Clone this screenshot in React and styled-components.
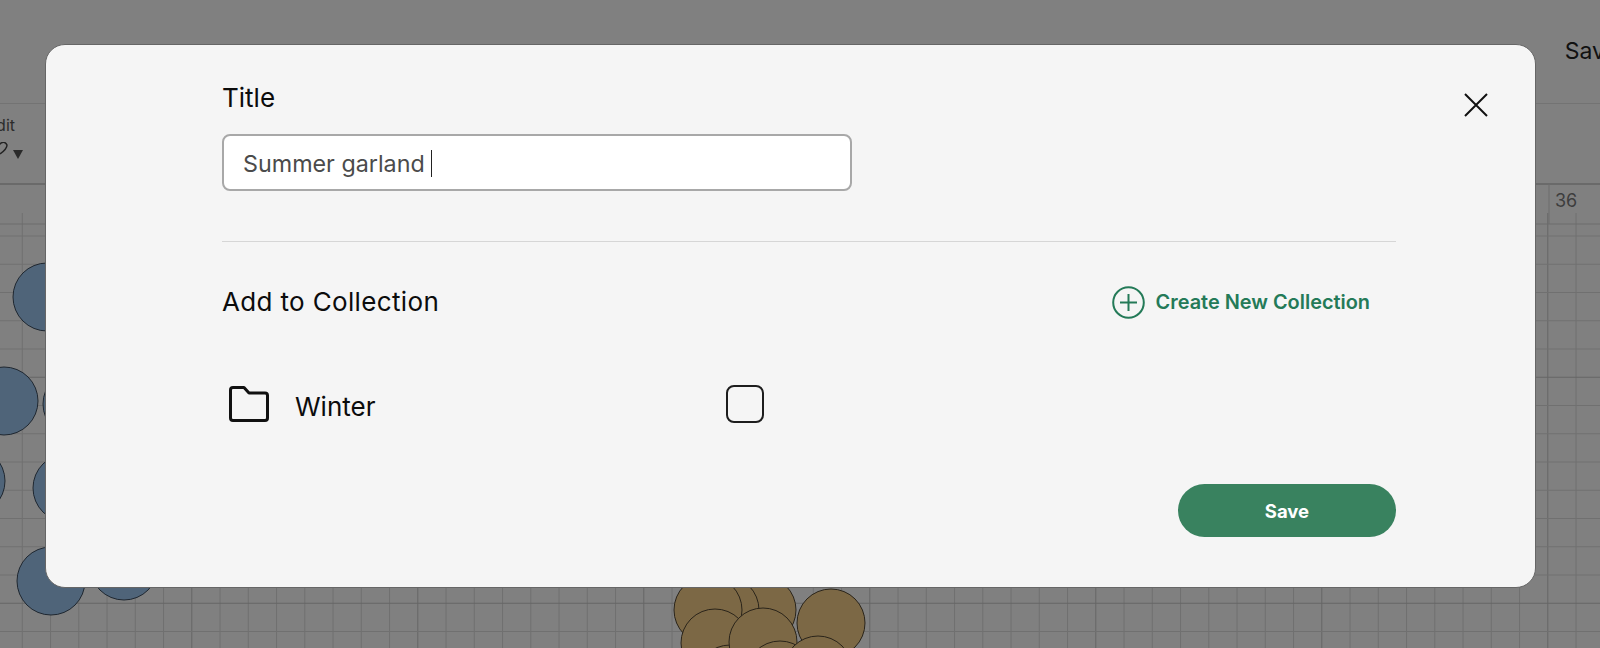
import React from "react";
import styled, { createGlobalStyle } from "styled-components";

const GlobalStyle = createGlobalStyle`
  html, body { margin: 0; padding: 0; height: 100%; overflow: hidden; }
  body { font-family: Inter, "Liberation Sans", sans-serif; background: #808080; }
`;

const Page = styled.div`
  position: relative;
  display: flex;
  flex-direction: column;
  width: 1600px;
  height: 648px;
  overflow: hidden;
  background: #808080;
`;

const TopBar = styled.div`
  display: flex;
  justify-content: flex-end;
  align-items: flex-start;
  height: 104px;
  padding-top: 37px;
  box-sizing: border-box;
  border-bottom: 1px solid #737373;
`;

const TopSave = styled.span`
  margin-right: -18px;
  font-size: 23px;
  line-height: 28px;
  color: #111;
`;

const ToolBar = styled.div`
  display: flex;
  height: 81px;
  box-sizing: border-box;
  border-bottom: 2px solid #6a6a6a;
`;

const ToolGroup = styled.div`
  display: flex;
  flex-direction: column;
  align-items: flex-end;
  width: 23px;
  padding-top: 11px;
`;

const ToolLabel = styled.span`
  font-size: 16px;
  line-height: 20px;
  color: #2c2c2c;
  margin-right: 8px;
`;

const ToolIcon = styled.svg`
  display: block;
  margin-top: 7px;
`;

const Canvas = styled.div`
  position: relative;
  flex: 1;
`;

const CanvasArt = styled.svg`
  position: absolute;
  left: 0;
  top: -185px;
`;

const RulerLabel = styled.span`
  position: absolute;
  left: 1555px;
  top: 4px;
  font-size: 18px;
  line-height: 24px;
  color: #3d3d3d;
`;

const Modal = styled.div`
  position: absolute;
  left: 45px;
  top: 44px;
  width: 1491px;
  height: 544px;
  box-sizing: border-box;
  padding: 38px 139px 0 176px;
  background: #f5f5f5;
  border: 1px solid #666;
  border-radius: 20px;
`;

const CloseButton = styled.button`
  position: absolute;
  right: 47px;
  top: 48px;
  display: flex;
  padding: 0;
  border: 0;
  background: none;
`;

const FieldLabel = styled.div`
  font-size: 26px;
  line-height: 30px;
  color: #0c0c0c;
`;

const TitleInput = styled.div`
  display: flex;
  align-items: center;
  width: 630px;
  height: 57px;
  margin-top: 21px;
  padding: 1px 0 0 19px;
  box-sizing: border-box;
  background: #fff;
  border: 2px solid #a8a8a8;
  border-radius: 8px;
  font-size: 23.3px;
  color: #4b4b4b;
`;

const Caret = styled.span`
  width: 1px;
  height: 27px;
  margin: 0 0 0 6px;
  background: #222;
`;

const Divider = styled.div`
  height: 1px;
  margin-top: 50px;
  background: #d6d6d6;
`;

const CollectionHeader = styled.div`
  display: flex;
  justify-content: space-between;
  align-items: center;
  margin-top: 42px;
  height: 36px;
`;

const SectionTitle = styled.div`
  font-size: 26px;
  line-height: 36px;
  letter-spacing: 0.35px;
  color: #0c0c0c;
`;

const CreateLink = styled.a`
  display: flex;
  align-items: center;
  gap: 11px;
  margin-right: 26px;
  font-size: 19.9px;
  font-weight: 600;
  color: #247a58;
`;

const CollectionRow = styled.div`
  display: flex;
  align-items: center;
  height: 40px;
  margin-top: 66px;
`;

const FolderIcon = styled.svg`
  margin: -4px -1px 0 7px;
`;

const FolderName = styled.span`
  width: 431px;
  margin-left: 27px;
  font-size: 26px;
  color: #0c0c0c;
`;

const Checkbox = styled.span`
  width: 34px;
  height: 34px;
  margin-top: -5px;
  border: 2px solid #1d1d1d;
  border-radius: 8px;
`;

const Footer = styled.div`
  display: flex;
  justify-content: flex-end;
  margin-top: 58px;
`;

const SaveButton = styled.button`
  width: 218px;
  height: 53px;
  border: 0;
  border-radius: 27px;
  background: #39825f;
  color: #fff;
  font-family: inherit;
  font-size: 18.5px;
  font-weight: 700;
`;

const BLUE = [
  [47, 297], [4, 401], [77, 404], [-29, 481], [67, 488], [124, 566], [51, 581],
];
const BROWN = [
  [762, 610], [725, 610], [708, 610], [831, 623], [715, 643], [730, 679],
  [763, 642], [780, 675], [818, 670],
];

const range = (start, step, end) => {
  const out = [];
  for (let v = start; v <= end; v += step) out.push(v);
  return out;
};

const CanvasDrawing = () => {
  const xs = range(22.3, 28.25, 1600);
  const ys = range(236, 28.25, 648);
  return (
    <CanvasArt width="1600" height="648" viewBox="0 0 1600 648">
      {xs.map((x, i) => (
        <line key={x} x1={x} x2={x} y1="213" y2="648" stroke={i % 8 === 6 ? "#666" : "#707070"} />
      ))}
      {ys.map((y, i) => (
        <line key={y} x1="0" x2="1600" y1={y} y2={y} stroke={i % 8 === 5 ? "#666" : "#707070"} />
      ))}
      <line x1="0" x2="1600" y1="224" y2="224" stroke="#6c6c6c" />
      <line x1="1549" x2="1549" y1="184" y2="224" stroke="#6c6c6c" />
      {BLUE.map(([cx, cy]) => (
        <circle key={cx} cx={cx} cy={cy} r="34" fill="#4f6479" stroke="#1f2730" strokeWidth="1" />
      ))}
      {BROWN.map(([cx, cy]) => (
        <circle key={cx + "-" + cy} cx={cx} cy={cy} r="34" fill="#7c6845" stroke="#2a241a" strokeWidth="1" />
      ))}
    </CanvasArt>
  );
};

export default function App() {
  return (
    <Page>
      <GlobalStyle />
      <TopBar>
        <TopSave>Save</TopSave>
      </TopBar>
      <ToolBar>
        <ToolGroup>
          <ToolLabel>Edit</ToolLabel>
          <ToolIcon width="23" height="20" viewBox="0 0 23 20">
            <path d="M-4 6 L1 1 Q5 -1 7 3 Q7 7 0 12" fill="none" stroke="#222" strokeWidth="1.5" />
            <path d="M13 8 H23 L18 17 Z" fill="#2a2a2a" />
          </ToolIcon>
        </ToolGroup>
      </ToolBar>
      <Canvas>
        <CanvasDrawing />
        <RulerLabel>36</RulerLabel>
      </Canvas>
      <Modal>
        <CloseButton aria-label="Close">
          <svg width="24" height="24" viewBox="0 0 24 24">
            <path d="M1 1 L23 23 M23 1 L1 23" stroke="#111" strokeWidth="2" fill="none" />
          </svg>
        </CloseButton>
        <FieldLabel>Title</FieldLabel>
        <TitleInput>
          Summer garland
          <Caret />
        </TitleInput>
        <Divider />
        <CollectionHeader>
          <SectionTitle>Add to Collection</SectionTitle>
          <CreateLink>
            <svg width="33" height="33" viewBox="0 0 33 33">
              <circle cx="16.5" cy="16.5" r="15.3" fill="none" stroke="#247a58" strokeWidth="2" />
              <path d="M16.5 8 V25 M8 16.5 H25" stroke="#247a58" strokeWidth="2" fill="none" />
            </svg>
            Create New Collection
          </CreateLink>
        </CollectionHeader>
        <CollectionRow>
          <FolderIcon width="40" height="36" viewBox="0 0 40 36">
            <path
              d="M1.5 4 Q1.5 1.5 4 1.5 H15 L20 7 H36 Q38.5 7 38.5 9.5 V32 Q38.5 34.5 36 34.5 H4 Q1.5 34.5 1.5 32 Z"
              fill="none"
              stroke="#111"
              strokeWidth="3"
              strokeLinejoin="round"
            />
          </FolderIcon>
          <FolderName>Winter</FolderName>
          <Checkbox />
        </CollectionRow>
        <Footer>
          <SaveButton>Save</SaveButton>
        </Footer>
      </Modal>
    </Page>
  );
}
